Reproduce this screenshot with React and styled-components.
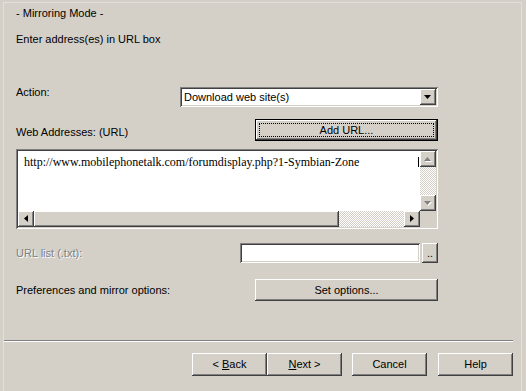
import React from "react";
import styled, { createGlobalStyle } from "styled-components";

const Global = createGlobalStyle`
    html, body {
        margin: 0;
        padding: 0;
        background: #d4d0c8;
    }
    body {
        font-family: "Liberation Sans", Arial, sans-serif;
        font-size: 11px;
        color: #000;
    }
`;

const raised = `
    box-shadow: inset -1px -1px #404040, inset 1px 1px #ffffff,
        inset -2px -2px #808080, inset 2px 2px #d4d0c8;
`;

const sunken = `
    box-shadow: inset 1px 1px #808080, inset -1px -1px #ffffff,
        inset 2px 2px #404040, inset -2px -2px #d4d0c8;
`;

const Page = styled.div`
    width: 526px;
    height: 391px;
    background: #d4d0c8;
    display: flex;
    flex-direction: column;
    overflow: hidden;
`;

const Frame = styled.div`
    flex: 1;
    margin: 2px 4px 0 3px;
    border: 1px solid #e2e0da;
    border-bottom: none;
    display: flex;
    flex-direction: column;
`;

const Body = styled.div`
    flex: 1;
    padding: 4px 83px 0 12px;
    display: flex;
    flex-direction: column;
`;

const Text = styled.div`
    line-height: 13px;
    white-space: nowrap;
    margin-top: ${(p) => p.$top || 0}px;
    color: ${(p) => (p.$disabled ? "#808080" : "#000")};
    text-shadow: ${(p) => (p.$disabled ? "1px 1px 0 #ffffff" : "none")};
`;

const Row = styled.div`
    display: flex;
    justify-content: space-between;
    align-items: ${(p) => p.$align || "center"};
    margin-top: ${(p) => p.$top}px;
`;

const Combo = styled.div`
    width: 258px;
    height: 20px;
    ${sunken}
    background: #fff;
    display: flex;
    align-items: center;
    padding: 2px;
    box-sizing: border-box;
`;

const ComboText = styled.div`
    flex: 1;
    padding-left: 2px;
    line-height: 16px;
`;

const ArrowButton = styled.div`
    width: 16px;
    height: 16px;
    background: #d4d0c8;
    ${raised}
    display: flex;
    align-items: center;
    justify-content: center;
    flex-shrink: 0;
`;

const Button = styled.div`
    width: ${(p) => p.$w}px;
    height: ${(p) => p.$h || 23}px;
    margin-left: ${(p) => p.$gap || 0}px;
    box-sizing: border-box;
    background: #d4d0c8;
    ${raised}
    display: flex;
    align-items: center;
    justify-content: center;
    line-height: 13px;
    white-space: pre;
`;

const DefaultButton = styled.div`
    width: ${(p) => p.$w}px;
    height: 22px;
    box-sizing: border-box;
    border: 1px solid #000;
    background: #d4d0c8;
    ${raised}
    display: flex;
    padding: 3px;
`;

const Focus = styled.div`
    flex: 1;
    border: 1px dotted #000;
    display: flex;
    align-items: center;
    justify-content: center;
    line-height: 13px;
`;

const TextBox = styled.div`
    margin-top: 8px;
    height: 80px;
    box-sizing: border-box;
    padding: 2px;
    ${sunken}
    background: #d4d0c8;
    display: grid;
    grid-template-columns: 1fr 16px;
    grid-template-rows: 1fr 16px;
`;

const Content = styled.div`
    background: #fff;
    display: flex;
    align-items: flex-start;
    padding: 4px 1px 0 6px;
    font-family: "Liberation Serif", "Times New Roman", serif;
    font-size: 12px;
    line-height: 14px;
    white-space: nowrap;
`;

const Caret = styled.span`
    width: 1px;
    height: 10px;
    margin-top: 2px;
    margin-left: auto;
    background: #000;
`;

const VBar = styled.div`
    display: flex;
    flex-direction: column;
`;

const HBar = styled.div`
    display: flex;
`;

const Track = styled.div`
    flex: 1;
    background-color: #fff;
    background-image: repeating-conic-gradient(#d4d0c8 0 25%, #ffffff 0 50%);
    background-size: 2px 2px;
`;

const Thumb = styled.div`
    width: ${(p) => p.$w}px;
    background: #d4d0c8;
    ${raised}
`;

const Corner = styled.div`
    background: #d4d0c8;
`;

const Field = styled.div`
    width: 180px;
    height: 20px;
    box-sizing: border-box;
    ${sunken}
    background: #fff;
`;

const FieldGroup = styled.div`
    display: flex;
    gap: 2px;
`;

const Footer = styled.div`
    display: flex;
    flex-direction: column;
    padding: 0 8px 15px 0;
`;

const Separator = styled.div`
    border-top: 1px solid #808080;
    border-bottom: 1px solid #ffffff;
    height: 0;
`;

const ButtonBar = styled.div`
    display: flex;
    justify-content: flex-end;
    margin-top: 11px;
`;

const Key = styled.span`
    text-decoration: underline;
`;

const Tri = ({ dir, disabled }) => {
    const paths = {
        up: "M3.5 0 L7 4 L0 4 Z",
        down: "M0 0 L7 0 L3.5 4 Z",
        left: "M4 0 L4 7 L0 3.5 Z",
        right: "M0 0 L4 3.5 L0 7 Z",
    };
    const vertical = dir === "up" || dir === "down";
    const w = vertical ? 8 : 5;
    const h = vertical ? 5 : 8;
    return (
        <svg width={w} height={h} viewBox={`0 0 ${w} ${h}`}>
            {disabled && (
                <path d={paths[dir]} fill="#ffffff" transform="translate(1 1)" />
            )}
            <path d={paths[dir]} fill={disabled ? "#808080" : "#000"} />
        </svg>
    );
};

const App = () => {
    return (
        <Page>
            <Global />
            <Frame>
                <Body>
                    <Text>- Mirroring Mode -</Text>
                    <Text $top={13}>Enter address(es) in URL box</Text>

                    <Row $top={41} $align="flex-start">
                        <Text $top={-1}>Action:</Text>
                        <Combo>
                            <ComboText>Download web site(s)</ComboText>
                            <ArrowButton>
                                <Tri dir="down" />
                            </ArrowButton>
                        </Combo>
                    </Row>

                    <Row $top={12} $align="flex-end">
                        <Text style={{ marginBottom: 2 }}>Web Addresses: (URL)</Text>
                        <DefaultButton $w={183}>
                            <Focus>Add URL...</Focus>
                        </DefaultButton>
                    </Row>

                    <TextBox>
                        <Content>
                            http://www.mobilephonetalk.com/forumdisplay.php?1-Symbian-Zone
                            <Caret />
                        </Content>
                        <VBar>
                            <ArrowButton>
                                <Tri dir="up" disabled />
                            </ArrowButton>
                            <Track />
                            <ArrowButton>
                                <Tri dir="down" disabled />
                            </ArrowButton>
                        </VBar>
                        <HBar>
                            <ArrowButton>
                                <Tri dir="left" />
                            </ArrowButton>
                            <Thumb $w={305} />
                            <Track />
                            <ArrowButton>
                                <Tri dir="right" />
                            </ArrowButton>
                        </HBar>
                        <Corner />
                    </TextBox>

                    <Row $top={14}>
                        <Text $disabled>URL list (.txt):</Text>
                        <FieldGroup>
                            <Field />
                            <Button $w={16} $h={20}>..</Button>
                        </FieldGroup>
                    </Row>

                    <Row $top={16}>
                        <Text>Preferences and mirror options:</Text>
                        <Button $w={183} $h={22}>Set options...</Button>
                    </Row>
                </Body>

                <Footer>
                    <Separator />
                    <ButtonBar>
                        <Button $w={75}>
                            <span>{"< "}<Key>B</Key>ack</span>
                        </Button>
                        <Button $w={75}>
                            <span><Key>N</Key>{"ext >"}</span>
                        </Button>
                        <Button $w={75} $gap={10}>Cancel</Button>
                        <Button $w={75} $gap={11}>Help</Button>
                    </ButtonBar>
                </Footer>
            </Frame>
        </Page>
    );
};

export default App;
